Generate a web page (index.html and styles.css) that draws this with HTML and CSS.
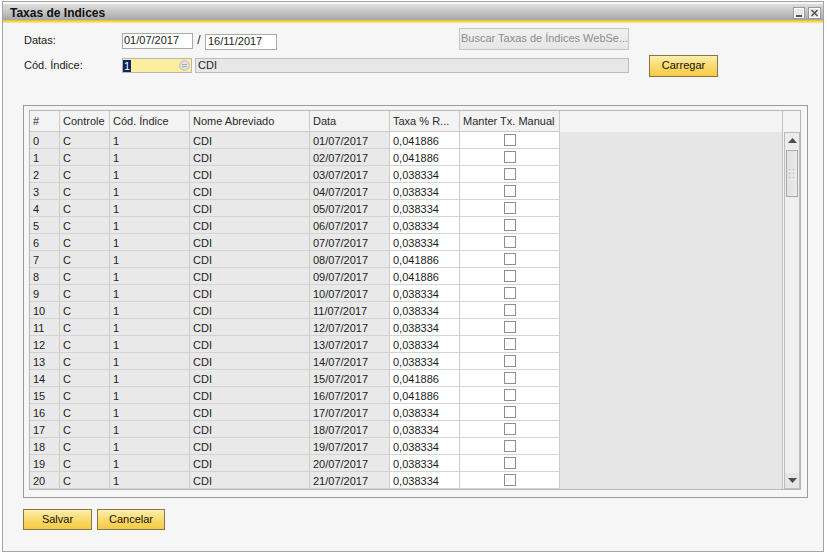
FILE: index.html
```html
<!DOCTYPE html>
<html lang="pt">
<head>
<meta charset="utf-8">
<title>Taxas de Indices</title>
<link rel="stylesheet" href="styles.css">
</head>
<body>
<div class="window">
  <div class="titlebar">
    <span class="title">Taxas de Indices</span>
    <div class="tb-buttons">
      <span class="tb-btn"><svg width="12" height="12" viewBox="0 0 12 12"><rect x="0.5" y="0.5" width="11" height="11" fill="#e9e9e9" stroke="#9a9a9a"/><rect x="1.5" y="1.5" width="9" height="9" fill="none" stroke="#ffffff"/><rect x="3" y="8" width="6" height="2" fill="#555"/></svg></span>
      <span class="tb-btn"><svg width="13" height="12" viewBox="0 0 13 12"><rect x="0.5" y="0.5" width="12" height="11" fill="#e9e9e9" stroke="#9a9a9a"/><rect x="1.5" y="1.5" width="10" height="9" fill="none" stroke="#ffffff"/><path d="M3.5 3 L9.5 9 M9.5 3 L3.5 9" stroke="#555" stroke-width="1.6"/></svg></span>
    </div>
  </div>
  <div class="title-accent"></div>

  <div class="content">
    <div class="form-row row-dates">
      <div class="label">Datas:</div>
      <div class="field date1">01/07/2017</div>
      <div class="slash">/</div>
      <div class="field date2">16/11/2017</div>
      <div class="btn-disabled">Buscar Taxas de Índices WebSe...</div>
    </div>
    <div class="form-row row-index">
      <div class="label">Cód. Índice:</div>
      <div class="field code"><span class="sel">1</span>
        <svg class="link-icon" width="11" height="11" viewBox="0 0 11 11"><circle cx="5.5" cy="5.5" r="4.8" fill="#e3e3e3" stroke="#b9b9b9"/><path d="M3 4.5 H8 M3 6.7 H8" stroke="#a9a9a9" stroke-width="1"/></svg>
      </div>
      <div class="field name">CDI</div>
      <div class="btn">Carregar</div>
    </div>

    <div class="frame">
      <div class="grid">
        <div class="cols">
          <div class="row head">
            <div class="c">#</div><div class="c">Controle</div><div class="c">Cód. Índice</div><div class="c">Nome Abreviado</div><div class="c">Data</div><div class="c">Taxa % R...</div><div class="c">Manter Tx. Manual</div><div class="fill"></div>
          </div>
          <div class="row"><div class="c ro">0</div><div class="c ro">C</div><div class="c ro">1</div><div class="c ro">CDI</div><div class="c ro">01/07/2017</div><div class="c ed">0,041886</div><div class="c ed chk"><span class="box"></span></div><div class="fill"></div></div>
          <div class="row"><div class="c ro">1</div><div class="c ro">C</div><div class="c ro">1</div><div class="c ro">CDI</div><div class="c ro">02/07/2017</div><div class="c ed">0,041886</div><div class="c ed chk"><span class="box"></span></div><div class="fill"></div></div>
          <div class="row"><div class="c ro">2</div><div class="c ro">C</div><div class="c ro">1</div><div class="c ro">CDI</div><div class="c ro">03/07/2017</div><div class="c ed">0,038334</div><div class="c ed chk"><span class="box"></span></div><div class="fill"></div></div>
          <div class="row"><div class="c ro">3</div><div class="c ro">C</div><div class="c ro">1</div><div class="c ro">CDI</div><div class="c ro">04/07/2017</div><div class="c ed">0,038334</div><div class="c ed chk"><span class="box"></span></div><div class="fill"></div></div>
          <div class="row"><div class="c ro">4</div><div class="c ro">C</div><div class="c ro">1</div><div class="c ro">CDI</div><div class="c ro">05/07/2017</div><div class="c ed">0,038334</div><div class="c ed chk"><span class="box"></span></div><div class="fill"></div></div>
          <div class="row"><div class="c ro">5</div><div class="c ro">C</div><div class="c ro">1</div><div class="c ro">CDI</div><div class="c ro">06/07/2017</div><div class="c ed">0,038334</div><div class="c ed chk"><span class="box"></span></div><div class="fill"></div></div>
          <div class="row"><div class="c ro">6</div><div class="c ro">C</div><div class="c ro">1</div><div class="c ro">CDI</div><div class="c ro">07/07/2017</div><div class="c ed">0,038334</div><div class="c ed chk"><span class="box"></span></div><div class="fill"></div></div>
          <div class="row"><div class="c ro">7</div><div class="c ro">C</div><div class="c ro">1</div><div class="c ro">CDI</div><div class="c ro">08/07/2017</div><div class="c ed">0,041886</div><div class="c ed chk"><span class="box"></span></div><div class="fill"></div></div>
          <div class="row"><div class="c ro">8</div><div class="c ro">C</div><div class="c ro">1</div><div class="c ro">CDI</div><div class="c ro">09/07/2017</div><div class="c ed">0,041886</div><div class="c ed chk"><span class="box"></span></div><div class="fill"></div></div>
          <div class="row"><div class="c ro">9</div><div class="c ro">C</div><div class="c ro">1</div><div class="c ro">CDI</div><div class="c ro">10/07/2017</div><div class="c ed">0,038334</div><div class="c ed chk"><span class="box"></span></div><div class="fill"></div></div>
          <div class="row"><div class="c ro">10</div><div class="c ro">C</div><div class="c ro">1</div><div class="c ro">CDI</div><div class="c ro">11/07/2017</div><div class="c ed">0,038334</div><div class="c ed chk"><span class="box"></span></div><div class="fill"></div></div>
          <div class="row"><div class="c ro">11</div><div class="c ro">C</div><div class="c ro">1</div><div class="c ro">CDI</div><div class="c ro">12/07/2017</div><div class="c ed">0,038334</div><div class="c ed chk"><span class="box"></span></div><div class="fill"></div></div>
          <div class="row"><div class="c ro">12</div><div class="c ro">C</div><div class="c ro">1</div><div class="c ro">CDI</div><div class="c ro">13/07/2017</div><div class="c ed">0,038334</div><div class="c ed chk"><span class="box"></span></div><div class="fill"></div></div>
          <div class="row"><div class="c ro">13</div><div class="c ro">C</div><div class="c ro">1</div><div class="c ro">CDI</div><div class="c ro">14/07/2017</div><div class="c ed">0,038334</div><div class="c ed chk"><span class="box"></span></div><div class="fill"></div></div>
          <div class="row"><div class="c ro">14</div><div class="c ro">C</div><div class="c ro">1</div><div class="c ro">CDI</div><div class="c ro">15/07/2017</div><div class="c ed">0,041886</div><div class="c ed chk"><span class="box"></span></div><div class="fill"></div></div>
          <div class="row"><div class="c ro">15</div><div class="c ro">C</div><div class="c ro">1</div><div class="c ro">CDI</div><div class="c ro">16/07/2017</div><div class="c ed">0,041886</div><div class="c ed chk"><span class="box"></span></div><div class="fill"></div></div>
          <div class="row"><div class="c ro">16</div><div class="c ro">C</div><div class="c ro">1</div><div class="c ro">CDI</div><div class="c ro">17/07/2017</div><div class="c ed">0,038334</div><div class="c ed chk"><span class="box"></span></div><div class="fill"></div></div>
          <div class="row"><div class="c ro">17</div><div class="c ro">C</div><div class="c ro">1</div><div class="c ro">CDI</div><div class="c ro">18/07/2017</div><div class="c ed">0,038334</div><div class="c ed chk"><span class="box"></span></div><div class="fill"></div></div>
          <div class="row"><div class="c ro">18</div><div class="c ro">C</div><div class="c ro">1</div><div class="c ro">CDI</div><div class="c ro">19/07/2017</div><div class="c ed">0,038334</div><div class="c ed chk"><span class="box"></span></div><div class="fill"></div></div>
          <div class="row"><div class="c ro">19</div><div class="c ro">C</div><div class="c ro">1</div><div class="c ro">CDI</div><div class="c ro">20/07/2017</div><div class="c ed">0,038334</div><div class="c ed chk"><span class="box"></span></div><div class="fill"></div></div>
          <div class="row"><div class="c ro">20</div><div class="c ro">C</div><div class="c ro">1</div><div class="c ro">CDI</div><div class="c ro">21/07/2017</div><div class="c ed">0,038334</div><div class="c ed chk"><span class="box"></span></div><div class="fill"></div></div>
        </div>
        <div class="scrollcol">
          <div class="scrollbar">
            <div class="sb-btn"><svg width="9" height="5" viewBox="0 0 9 5"><path d="M0 5 L4.5 0 L9 5 Z" fill="#4d4d4d"/></svg></div>
            <div class="sb-thumb"><svg width="6" height="9" viewBox="0 0 6 9"><g fill="#a8a8a8"><rect x="0" y="0" width="1" height="1"/><rect x="4" y="0" width="1" height="1"/><rect x="0" y="4" width="1" height="1"/><rect x="4" y="4" width="1" height="1"/><rect x="0" y="8" width="1" height="1"/><rect x="4" y="8" width="1" height="1"/></g></svg></div>
            <div class="sb-track"></div>
            <div class="sb-btn down"><svg width="9" height="5" viewBox="0 0 9 5"><path d="M0 0 L9 0 L4.5 5 Z" fill="#4d4d4d"/></svg></div>
          </div>
        </div>
      </div>
    </div>

    <div class="actions">
      <div class="btn salvar">Salvar</div>
      <div class="btn cancelar">Cancelar</div>
    </div>
  </div>
</div>
</body>
</html>
```
FILE: styles.css
```css
html, body {
  margin: 0;
  padding: 0;
  background: #ffffff;
}

body {
  font-family: "Liberation Sans", Arial, sans-serif;
  font-size: 11px;
  color: #1c1c1c;
}

.window {
  box-sizing: border-box;
  margin: 1px 0 0 2px;
  width: 822px;
  height: 551px;
  border: 1px solid #a4a4a4;
  background: #f6f6f6;
}

.titlebar {
  box-sizing: border-box;
  margin-top: 2px;
  height: 16px;
  display: flex;
  align-items: center;
  padding-left: 7px;
  padding-right: 2px;
  padding-top: 1px;
  background: linear-gradient(#dedede, #c2c2c2 55%, #a6a6a6);
}

.title {
  font-weight: bold;
  font-size: 12px;
  color: #111;
}

.tb-buttons {
  margin-left: auto;
  display: flex;
  gap: 3px;
}

.tb-btn {
  display: block;
  height: 12px;
}

.tb-btn svg {
  display: block;
}

.title-accent {
  height: 3px;
  background: linear-gradient(#efbb16, #f8d860 60%, #fbe9a8);
}

.content {
  padding: 5px 0 0 20px;
}

.form-row {
  display: flex;
  padding-left: 1px;
}

.row-dates {
  height: 22px;
}

.row-index {
  height: 23px;
  margin-top: 4px;
}

.label {
  width: 98px;
  line-height: 14px;
  padding-top: 5px;
  color: #202020;
}

.row-index .label {
  padding-top: 4px;
}

.field {
  box-sizing: border-box;
  border: 1px solid #a9a9a9;
  background: #ffffff;
  line-height: 13px;
  white-space: nowrap;
}

.date1 {
  margin-top: 5px;
  width: 71px;
  height: 16px;
  padding-left: 1px;
}

.slash {
  width: 12px;
  text-align: center;
  padding-top: 5px;
  line-height: 14px;
  font-size: 12px;
}

.date2 {
  margin-top: 6px;
  width: 72px;
  height: 16px;
  padding-left: 2px;
}

.btn-disabled {
  box-sizing: border-box;
  margin-left: 182px;
  width: 170px;
  height: 22px;
  border: 1px solid #c6c6c6;
  background: linear-gradient(#f0f0f0, #e6e6e6);
  color: #8c8c8c;
  line-height: 19px;
  padding-left: 1px;
  white-space: nowrap;
  overflow: hidden;
}

.code {
  position: relative;
  margin-top: 4px;
  width: 70px;
  height: 15px;
  background: #fcee9f;
  border-color: #b5b5b5;
  padding-left: 0;
}

.sel {
  display: inline-block;
  margin-top: 1px;
  padding: 0 1px;
  background: #0c2460;
  color: #ffffff;
  line-height: 12px;
}

.link-icon {
  position: absolute;
  right: 1px;
  top: 1px;
}

.name {
  margin-top: 4px;
  margin-left: 3px;
  width: 434px;
  height: 15px;
  background: #e7e7e7;
  border-color: #bcbcbc;
  padding-left: 2px;
}

.btn {
  box-sizing: border-box;
  height: 22px;
  border: 1px solid #85764c;
  background: linear-gradient(#fdefb0, #fbdc72 45%, #f6ca44);
  color: #111;
  text-align: center;
  line-height: 19px;
}

.row-index .btn {
  margin-top: 1px;
  margin-left: 20px;
  width: 69px;
}

.frame {
  box-sizing: border-box;
  margin-top: 28px;
  width: 785px;
  border: 1px solid #9c9c9c;
  padding: 4px 6px 7px 5px;
  background: #f6f6f6;
}

.grid {
  box-sizing: border-box;
  display: flex;
  width: 772px;
  height: 380px;
  border: 1px solid #b6b6b6;
  background: #f4f4f4;
}

.cols {
  box-sizing: border-box;
  width: 753px;
  border-right: 1px solid #c2c2c2;
}

.row {
  display: grid;
  grid-template-columns: 30px 50px 80px 120px 80px 70px 100px 1fr;
  height: 17px;
}

.row.head {
  height: 21px;
  background: #f3f3f3;
}

.c {
  box-sizing: border-box;
  border-right: 1px solid #cbcbcb;
  border-bottom: 1px solid #d3d3d3;
  padding-left: 3px;
  line-height: 18px;
  white-space: nowrap;
  overflow: hidden;
  color: #1c1c1c;
}

.head .c {
  line-height: 20px;
  border-bottom-color: #cbcbcb;
  color: #2a2a2a;
}

.ro {
  background: #e9e9e9;
}

.ed {
  background: #ffffff;
}

.chk {
  display: flex;
  justify-content: center;
  align-items: center;
  padding-left: 1px;
}

.box {
  box-sizing: border-box;
  width: 12px;
  height: 12px;
  border: 1px solid #8e8e8e;
  background: #ffffff;
}

.fill {
  background: #e6e6e6;
}

.head .fill {
  background: #f3f3f3;
}

.scrollcol {
  box-sizing: border-box;
  width: 17px;
  padding-top: 21px;
  background: #f4f4f4;
}

.scrollbar {
  box-sizing: border-box;
  margin-left: 1px;
  width: 16px;
  height: 357px;
  border: 1px solid #bdbdbd;
  background: #efefef;
  display: flex;
  flex-direction: column;
}

.sb-btn {
  height: 15px;
  display: flex;
  align-items: center;
  justify-content: center;
  background: #ececec;
}

.sb-btn svg {
  display: block;
}

.sb-thumb {
  box-sizing: border-box;
  margin: 2px 1px 0;
  height: 47px;
  border: 1px solid #a9a9a9;
  background: linear-gradient(90deg, #e2e2e2, #ebebeb);
  display: flex;
  align-items: center;
  justify-content: center;
}

.sb-track {
  flex: 1;
}

.sb-btn.down {
  background: #e6e6e6;
}

.actions {
  display: flex;
  gap: 5px;
  margin-top: 11px;
}

.actions .btn {
  height: 21px;
  line-height: 18px;
}

.salvar {
  width: 69px;
}

.cancelar {
  width: 68px;
}
```
